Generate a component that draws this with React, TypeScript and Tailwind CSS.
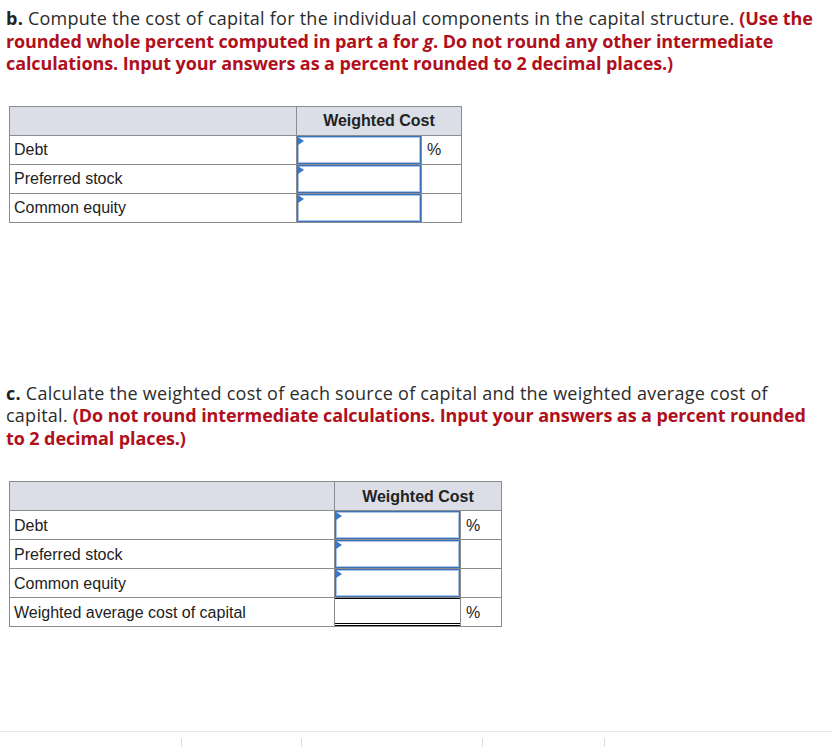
import React from "react";

const qFont = { fontFamily: "'Open Sans', Lato, sans-serif" };

function AnswerInput() {
  return (
    <div className="relative h-full w-full border border-[#3e72b8] shadow-[inset_0_0_0_1px_#a9c5ea] bg-white">
      <span className="absolute left-0 top-0 h-0 w-0 border-y-[4px] border-l-[6px] border-y-transparent border-l-[#3a78c8]" />
    </div>
  );
}

interface Row {
  label: string;
  kind: "input" | "total";
  pct: boolean;
}

function CostTable({ rows, firstW, midW, lastW }: { rows: Row[]; firstW: number; midW: number; lastW: number }) {
  return (
    <table
      className="border-collapse text-[16px] text-[#222]"
      style={{ fontFamily: "'Liberation Sans', Arial, sans-serif" }}
    >
      <colgroup>
        <col style={{ width: firstW }} />
        <col style={{ width: midW }} />
        <col style={{ width: lastW }} />
      </colgroup>
      <thead>
        <tr className="h-[29px] bg-[#dbdee6]">
          <th className="border border-[#8c8c8c]" />
          <th colSpan={2} className="border border-[#8c8c8c] pt-[1px] text-center font-bold">
            Weighted Cost
          </th>
        </tr>
      </thead>
      <tbody>
        {rows.map((r) => (
          <tr key={r.label} className="h-[29px]">
            <td className="border border-[#8c8c8c] px-[4px] pt-[1px] leading-none">{r.label}</td>
            <td className="border border-[#8c8c8c] p-0 h-[29px]">
              {r.kind === "input" ? (
                <AnswerInput />
              ) : (
                <div className="h-full w-full border-t border-black border-b-[3px] border-b-black [border-bottom-style:double]" />
              )}
            </td>
            <td className="border border-[#8c8c8c] px-[5px] pt-[1px] leading-none">{r.pct ? "%" : ""}</td>
          </tr>
        ))}
      </tbody>
    </table>
  );
}

export default function App() {
  const redB = "font-bold text-[#b0101c] tracking-[-0.1px]";
  return (
    <div className="relative min-h-[747px] w-[832px] bg-white overflow-hidden">
      <div className="px-[6px] pt-[7px]">
        <p className="text-[18px] leading-[22.5px] tracking-[0.25px] text-[#2c2c2c]" style={qFont}>
          <b className="text-[#222]">b.</b> Compute the cost of capital for the individual components in the capital
          structure.{" "}
          <span className={redB}>
            (Use the rounded whole percent computed in part a for <i>g</i>. Do not round any other intermediate
            calculations. Input your answers as a percent rounded to 2 decimal places.)
          </span>
        </p>
        <div className="mt-[31px] pl-[3px]">
          <CostTable
            firstW={287}
            midW={125}
            lastW={40}
            rows={[
              { label: "Debt", kind: "input", pct: true },
              { label: "Preferred stock", kind: "input", pct: false },
              { label: "Common equity", kind: "input", pct: false },
            ]}
          />
        </div>

        <p className="mt-[159px] text-[18px] leading-[22.5px] tracking-[0.25px] text-[#2c2c2c]" style={qFont}>
          <b className="text-[#222]">c.</b> Calculate the weighted cost of each source of capital and the weighted
          average cost of capital.{" "}
          <span className={redB}>
            (Do not round intermediate calculations. Input your answers as a percent rounded to 2 decimal places.)
          </span>
        </p>
        <div className="mt-[32px] pl-[3px]">
          <CostTable
            firstW={325}
            midW={126}
            lastW={41}
            rows={[
              { label: "Debt", kind: "input", pct: true },
              { label: "Preferred stock", kind: "input", pct: false },
              { label: "Common equity", kind: "input", pct: false },
              { label: "Weighted average cost of capital", kind: "total", pct: true },
            ]}
          />
        </div>
      </div>

      <div className="absolute bottom-0 left-0 right-0 h-[16px] border-t border-[#e8e8e8] flex">
        <div className="w-[181px]" />
        <div className="mt-[6px] h-[10px] w-[120px] border-l border-[#dcdcdc]" />
        <div className="mt-[6px] h-[10px] w-[181px] border-l border-[#dcdcdc]" />
        <div className="mt-[6px] h-[10px] w-[122px] border-l border-[#dcdcdc]" />
        <div className="mt-[6px] h-[10px] flex-1 border-l border-[#dcdcdc]" />
      </div>
    </div>
  );
}
